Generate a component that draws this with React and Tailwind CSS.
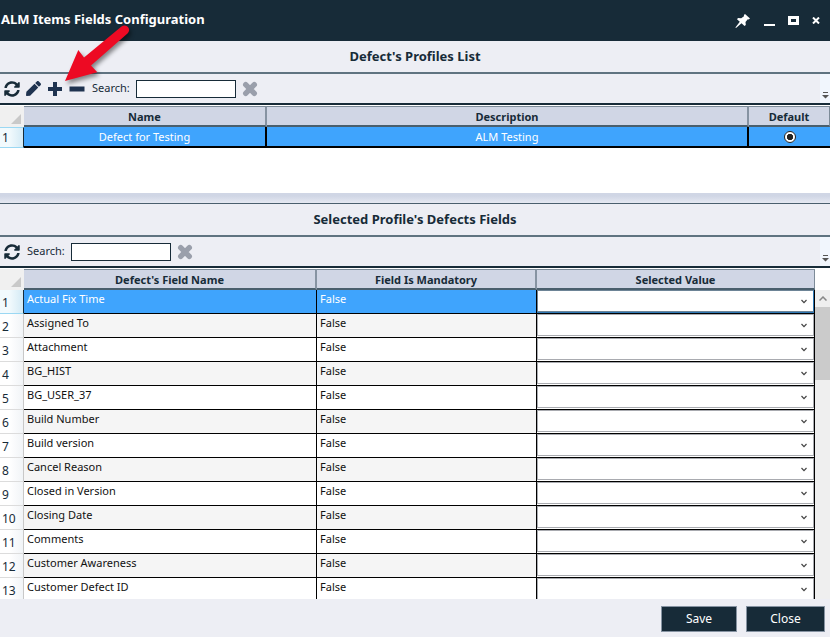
import React from "react";
import { FaSyncAlt, FaPen } from "react-icons/fa";

const FIELDS = [
  "Actual Fix Time",
  "Assigned To",
  "Attachment",
  "BG_HIST",
  "BG_USER_37",
  "Build Number",
  "Build version",
  "Cancel Reason",
  "Closed in Version",
  "Closing Date",
  "Comments",
  "Customer Awareness",
  "Customer Defect ID",
];

function ClearIcon() {
  return (
    <svg className="size-4" viewBox="0 0 16 16" fill="none" stroke="#9a9fab" strokeWidth="5.4" strokeLinecap="round">
      <path d="M3.700 3.700l8.600 8.600M12.300 3.700l-8.600 8.600" />
    </svg>
  );
}

function PinIcon() {
  return (
    <svg className="size-4" viewBox="0 0 16 16" fill="#fff">
      <path d="M10 1l5 4.600-1.300 1L12.800 6.300 10.500 9l.3 3-1.300 1-3-2.700L1 15l-.6-.6L4.800 8.700 2 6.300l1-1.200 3.200.2L9 3.200 8.900 2z" />
    </svg>
  );
}

function SectionTitle({ children }) {
  return (
    <h2 className="flex h-[31px] shrink-0 items-center justify-center pt-px text-[13px] font-bold text-[#172b38]">
      {children}
    </h2>
  );
}

function Toolbar({ id, editable }) {
  return (
    <div className="flex h-[33px] shrink-0 border-t-2 border-b-2 border-t-[#5f7380] border-b-[#172b38]">
      <div className="flex flex-1 items-center gap-[6px] pl-1 text-[#1f3350]">
        <button aria-label="Refresh" className="p-0 text-[#172b38]">
          <FaSyncAlt className="size-4" />
        </button>
        {editable && (
          <>
            <button aria-label="Edit">
              <FaPen className="size-[15px]" />
            </button>
            <button aria-label="Add">
              <svg className="size-4" viewBox="0 0 16 16" fill="currentColor">
                <path d="M6 1h4v5h5v4h-5v5H6v-5H1V6h5z" />
              </svg>
            </button>
            <button aria-label="Delete">
              <svg className="size-4" viewBox="0 0 16 16" fill="currentColor">
                <path d="M.5 5.500h15v5H.5z" />
              </svg>
            </button>
          </>
        )}
        <label htmlFor={id} className="pl-px text-[11px] text-[#172b38]">
          Search:
        </label>
        <input id={id} type="text" className="h-[18px] w-[100px] border border-[#172b38] bg-white px-1 text-[11px] outline-none" />
        <button aria-label="Clear search">
          <ClearIcon />
        </button>
      </div>
      <button aria-label="Toolbar options" className="flex w-[10px] items-end justify-center bg-[#f1f6fd] pb-1">
        <svg className="h-[7px] w-[7px]" viewBox="0 0 7 7" fill="#555">
          <path d="M1 0h5v1H1zM0 3h7L3.500 6.500z" />
        </svg>
      </button>
    </div>
  );
}

function CornerCell() {
  return (
    <th scope="col" aria-label="Row" className="bg-[#f0f0f0] align-bottom">
      <svg className="mb-[3px] ml-[11px] size-[10px]" viewBox="0 0 10 10" fill="#c9c9c9">
        <path d="M10 0v10H0z" />
      </svg>
    </th>
  );
}

function HeadCell({ children, last }) {
  return (
    <th
      scope="col"
      className={
        "h-[21px] border-t border-b-2 border-t-[#7d8b98] border-b-[#4a5f6d] bg-[#d0d6e5] p-0 pt-px text-center text-[11px] leading-[17px] font-bold text-[#172b38] " +
        (last ? "border-r border-r-[#7d8b98]" : "border-r-2 border-r-[#8693a2]")
      }
    >
      {children}
    </th>
  );
}

function ProfilesTable() {
  const cell = "h-[21px] border-b-2 border-black bg-[#3fa4fd] p-0 text-center text-[11px] leading-[18px] text-white";
  return (
    <table className="w-full table-fixed border-separate border-spacing-0">
      <colgroup>
        <col className="w-6" />
        <col className="w-[243px]" />
        <col />
        <col className="w-[81px]" />
      </colgroup>
      <thead>
        <tr>
          <CornerCell />
          <HeadCell>Name</HeadCell>
          <HeadCell>Description</HeadCell>
          <HeadCell last>Default</HeadCell>
        </tr>
      </thead>
      <tbody>
        <tr>
          <th
            scope="row"
            className="border-y border-r border-[#9bd8f3] border-r-[#172b38] bg-linear-to-r from-[#f2fafd] from-40% to-[#d3eaf5] p-0 pl-[2px] text-left text-xs font-normal text-[#172b38]"
          >
            1
          </th>
          <td className={cell + " border-r-2"}>Defect for Testing</td>
          <td className={cell + " border-r-2"}>ALM Testing</td>
          <td className={cell}>
            <input
              type="radio"
              name="default-profile"
              aria-label="Default profile"
              defaultChecked
              className="mx-auto mt-px block size-3 appearance-none rounded-full border border-[#222] bg-white bg-radial from-[#222] from-40% to-white to-50%"
            />
          </td>
        </tr>
      </tbody>
    </table>
  );
}

function FieldRow({ name, index }) {
  const selected = index === 0;
  const tone = selected ? "bg-[#3fa4fd] text-white" : index % 2 ? "bg-[#f5f5f5] text-[#111]" : "bg-white text-[#111]";
  const cell = "h-6 border-b border-r border-black p-0 pl-[3px] align-top text-[11px] leading-[18px] " + tone;
  return (
    <tr>
      <th
        scope="row"
        className={
          "h-6 border-r border-b p-0 pt-1 pl-[2px] text-left align-top text-xs leading-[18px] font-normal text-[#172b38] " +
          (selected
            ? "border-b-[#9bd8f3] border-r-[#172b38] bg-linear-to-r from-[#f2fafd] from-40% to-[#d3eaf5]"
            : "border-b-[#dcdcdc] border-r-[#c8c8c8] bg-linear-to-r from-white from-40% to-[#f1f4f7]")
        }
      >
        {index + 1}
      </th>
      <td className={cell}>{name}</td>
      <td className={cell}>False</td>
      <td className="h-6 border-r border-b border-black bg-white p-0 align-top">
        <div className={"grid border-b " + (selected ? "border-[#2f78b5]" : "border-white")}>
          <select
            aria-label={"Selected value for " + name}
            className={
              "col-start-1 row-start-1 h-[22px] w-full appearance-none border bg-white px-1 text-[11px] outline-none " +
              (selected ? "border-[#6d8496] border-r-[#2f78b5]" : "border-[#a9abb0]")
            }
          >
            <option></option>
          </select>
          <svg
            className="pointer-events-none col-start-1 row-start-1 mr-[7px] h-[5px] w-[6px] self-center justify-self-end"
            viewBox="0 0 6 5"
            fill="none"
            stroke="#444"
            strokeWidth="1.2"
          >
            <path d="M.5 1L3 3.600L5.500 1" />
          </svg>
        </div>
      </td>
    </tr>
  );
}

function FieldsTable() {
  return (
    <table className="w-full table-fixed border-separate border-spacing-0">
      <colgroup>
        <col className="w-6" />
        <col className="w-[293px]" />
        <col className="w-[220px]" />
        <col />
      </colgroup>
      <thead>
        <tr>
          <CornerCell />
          <HeadCell>Defect's Field Name</HeadCell>
          <HeadCell>Field Is Mandatory</HeadCell>
          <HeadCell last>Selected Value</HeadCell>
        </tr>
      </thead>
      <tbody>
        {FIELDS.map((name, i) => (
          <FieldRow key={name} name={name} index={i} />
        ))}
      </tbody>
    </table>
  );
}

export default function App() {
  return (
    <div className="relative flex h-screen flex-col overflow-hidden bg-[#edeef4] font-['Noto_Sans','Open_Sans',sans-serif]">
      <header className="flex h-[41px] shrink-0 items-center justify-between bg-[#172b38] pr-[10px] pl-px text-white">
        <h1 className="pb-px text-[13px] font-bold">ALM Items Fields Configuration</h1>
        <div className="flex items-center gap-[13px]">
          <button aria-label="Pin">
            <PinIcon />
          </button>
          <button aria-label="Minimize">
            <svg className="h-[10px] w-[11px]" viewBox="0 0 11 10" fill="#fff">
              <path d="M0 8h11v2H0z" />
            </svg>
          </button>
          <button aria-label="Maximize">
            <svg className="h-[9px] w-[11px]" viewBox="0 0 11 9" fill="none" stroke="#fff" strokeWidth="3">
              <path d="M1.500 1.500h8v6h-8z" />
            </svg>
          </button>
          <button aria-label="Close window">
            <svg className="h-[7px] w-[8px]" viewBox="0 0 8 7" fill="none" stroke="#fff" strokeWidth="2">
              <path d="M1 .5l6 6M7 .5l-6 6" />
            </svg>
          </button>
        </div>
      </header>

      <SectionTitle>Defect's Profiles List</SectionTitle>
      <Toolbar id="profile-search" editable />
      <div className="h-[88px] shrink-0 bg-white pt-px">
        <ProfilesTable />
      </div>

      <div className="h-[11px] shrink-0 border-b border-[#4a5f6d] bg-linear-to-b from-[#d0d6e5] from-30% to-[#e6e9f2]" />

      <SectionTitle>Selected Profile's Defects Fields</SectionTitle>
      <Toolbar id="field-search" />
      <div className="flex min-h-0 flex-1 overflow-hidden bg-white pt-px">
        <div className="min-w-0 flex-1">
          <FieldsTable />
        </div>
        <div className="mt-[21px] flex w-[15px] flex-col bg-[#efefef]">
          <button aria-label="Scroll up" className="flex h-[17px] shrink-0 items-center justify-center">
            <svg className="h-[5px] w-2" viewBox="0 0 8 5" fill="none" stroke="#888" strokeWidth="1.5">
              <path d="M.5 4.500L4 1l3.500 3.500" />
            </svg>
          </button>
          <div className="h-[73px] shrink-0 bg-[#cbcbcb]" />
        </div>
      </div>

      <footer className="flex h-[38px] shrink-0 items-start justify-end gap-[9px] pt-[7px] pr-[5px]">
        <button className="h-[26px] w-[76px] border border-[#8693a2] bg-[#172b38] text-xs text-white">Save</button>
        <button className="h-[26px] w-[79px] border border-[#8693a2] bg-[#172b38] text-xs text-white">Close</button>
      </footer>

      <svg
        className="pointer-events-none absolute top-5 left-15 h-[68px] w-20 drop-shadow-[2px_3px_2px_rgba(0,0,0,0.45)]"
        viewBox="60 20 80 68"
        fill="#ed0a23"
      >
        <path d="M65 81L78.300 50L84 57.500L121.500 26.500A4.600 4.600 0 0 1 127.500 33.500L91 65.500L97.300 72.300Z" />
      </svg>
    </div>
  );
}
